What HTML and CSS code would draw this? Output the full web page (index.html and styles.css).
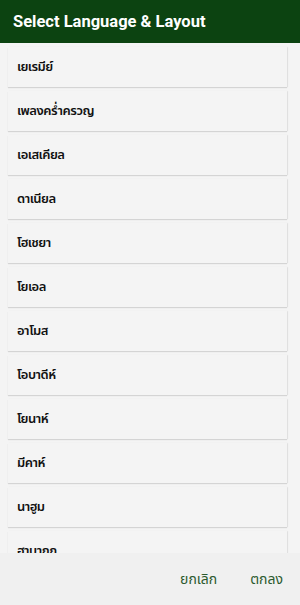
FILE: index.html
```html
<!DOCTYPE html>
<html lang="th">
<head>
<meta charset="utf-8">
<link rel="stylesheet" href="styles.css">
</head>
<body>
<div class="dialog">
  <div class="header">Select Language &amp; Layout</div>
  <div class="list">
    <div class="item">เยเรมีย์</div>
    <div class="item">เพลงคร่ำครวญ</div>
    <div class="item">เอเสเคียล</div>
    <div class="item">ดาเนียล</div>
    <div class="item">โฮเชยา</div>
    <div class="item">โยเอล</div>
    <div class="item">อาโมส</div>
    <div class="item">โอบาดีห์</div>
    <div class="item">โยนาห์</div>
    <div class="item">มีคาห์</div>
    <div class="item">นาฮูม</div>
    <div class="item">ฮาบากุก</div>
  </div>
  <div class="footer">
    <span class="btn">ยกเลิก</span>
    <span class="btn">ตกลง</span>
  </div>
</div>
</body>
</html>
```
FILE: styles.css
```css
html, body {
  margin: 0;
  padding: 0;
  background: #f2f2f2;
}
.dialog {
  width: 300px;
  height: 605px;
  display: flex;
  flex-direction: column;
  font-family: Roboto, "Noto Sans", "Noto Sans Thai", sans-serif;
}
.header {
  height: 43px;
  flex: none;
  background: #0c4311;
  color: #ffffff;
  font-weight: bold;
  font-size: 16.5px;
  line-height: 44px;
  padding-left: 13px;
  box-sizing: border-box;
}
.list {
  height: 510px;
  flex: none;
  overflow: hidden;
  background: #f4f4f4;
  padding: 4px 13px 0 8px;
  box-sizing: border-box;
  display: flex;
  flex-direction: column;
  gap: 4px;
}
.item {
  flex: none;
  height: 40px;
  background: #f4f4f4;
  box-shadow: 0 1px 1px rgba(0,0,0,0.12), 1px 0 1px rgba(0,0,0,0.06);
  font-size: 13px;
  font-weight: 600;
  letter-spacing: -0.5px;
  color: #111;
  line-height: 40px;
  padding-left: 9px;
}
.footer {
  flex: 1;
  background: #f0f0f0;
  display: flex;
  justify-content: flex-end;
  align-items: center;
  gap: 33px;
  padding-right: 17px;
}
.btn {
  color: #2c5a2e;
  font-size: 14px;
}
```
